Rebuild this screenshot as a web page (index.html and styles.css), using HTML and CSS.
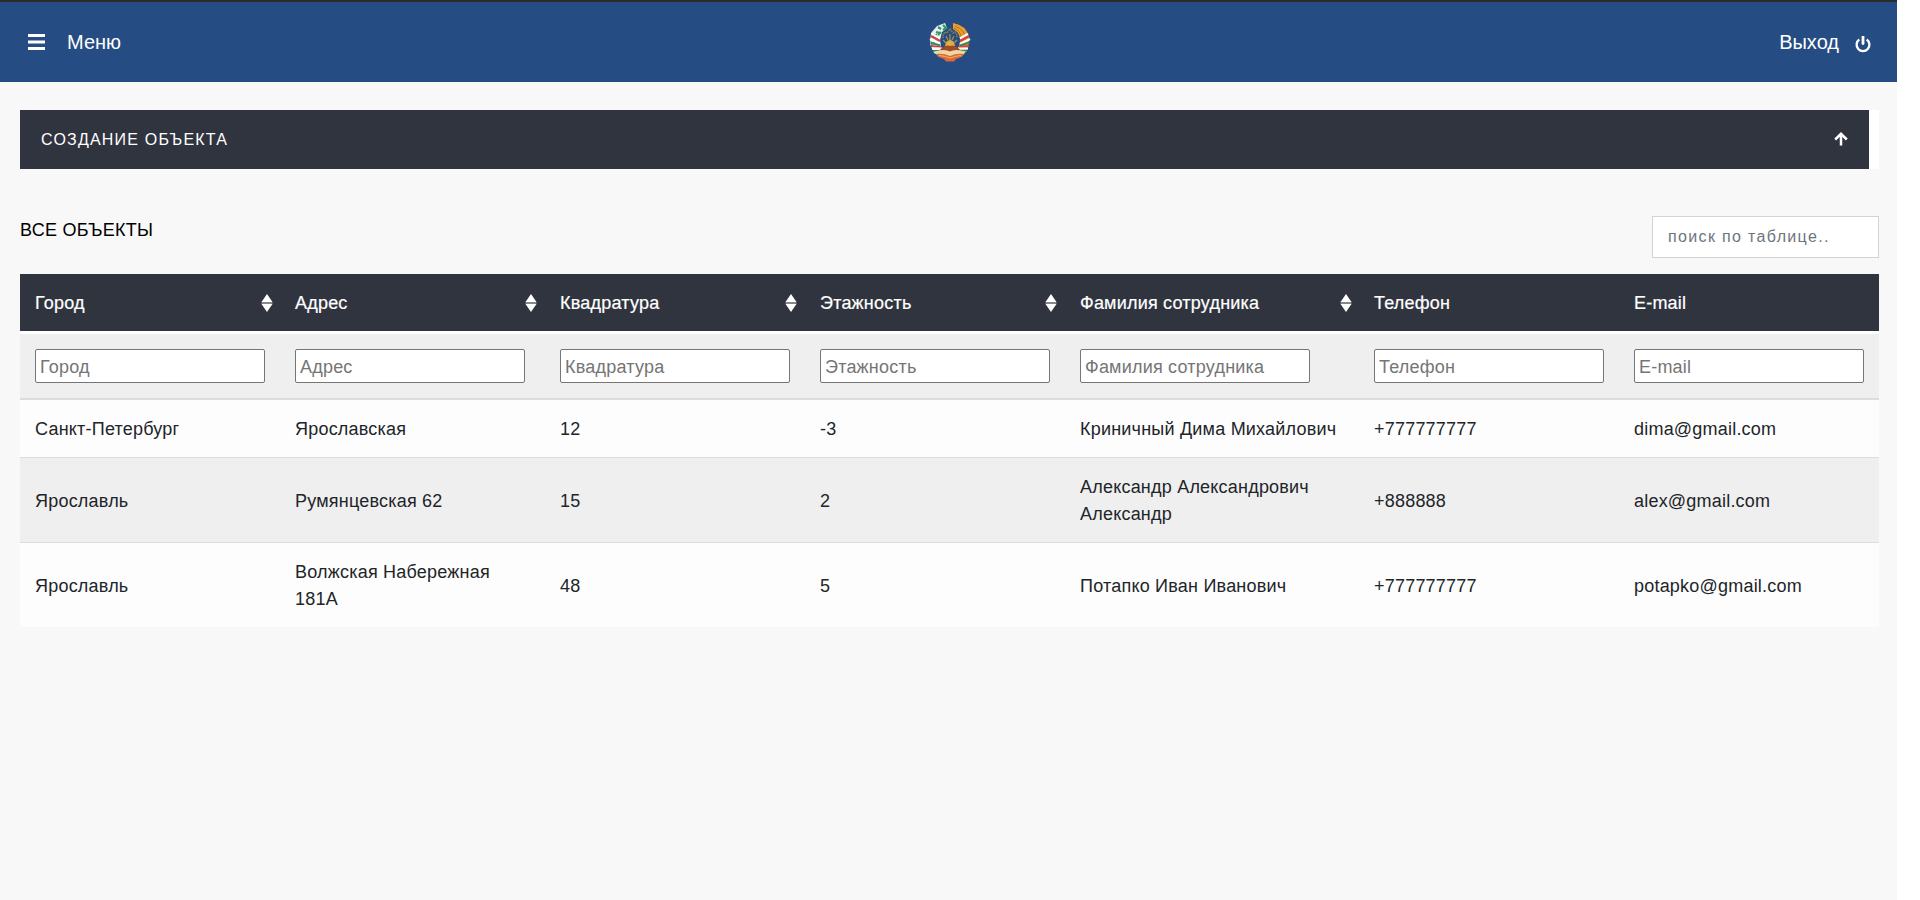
FILE: index.html
```html
<!DOCTYPE html>
<html lang="ru">
<head>
<meta charset="utf-8">
<title>Объекты</title>
<link rel="stylesheet" href="styles.css">
</head>
<body>
<div class="page">
  <header class="topbar">
    <a class="menu">
      <svg class="menu-icon" width="17" height="16" viewBox="0 0 17 16"><path d="M0 0h17v3H0zM0 6.5h17v3H0zM0 13h17v3H0z" fill="#fff"/></svg>
      <span>Меню</span>
    </a>
    <svg class="emblem" width="44" height="44" viewBox="0 0 44 44">
      <path d="M17 3L9 6L3 13L2 24L6 33L14 37L13 27L12 20L14 12L19 8Z" fill="#e4f1ea"/>
      <path d="M10 7l3 2M15 5l3 3-3 2M8 12l4 1M4 17l4-2 1 4M3 24l5-1M13 12l-3 3" stroke="#2c9a66" stroke-width="2.2" fill="none"/>
      <path d="M25 3Q38 5 41 17Q42 29 33 37L29 30Q34 22 31 15Q29 11 25 9Z" fill="#eb9e2c"/>
      <path d="M27 6Q38 10 38 22M26 8Q35 12 34 24" stroke="#b5731f" fill="none"/>
      <path d="M15 18v-3l2-3 2 1 3-4 3 4 2-1 2 3v3" stroke="#8a7c52" stroke-width="1.6" stroke-dasharray="1.5 .8" fill="none"/>
      <path d="M15 20l3 3M29 20l-3 3M18 16l2 4M26 16l-2 4M22 14v6" stroke="#a98c4b" stroke-width="1.3"/>
      <path d="M17 29v-3q1-6 5-6t5 6v3z" fill="#dfb03a"/>
      <path d="M4 14l8 4.500M40 14l-8 4.500" stroke="#fff" stroke-width="2.4"/>
      <path d="M3 16l9 5M41 16l-9 5" stroke="#dc3f43" stroke-width="2.2"/>
      <path d="M2 19l10 5M42 19l-10 5" stroke="#fff" stroke-width="2.5"/>
      <path d="M2.500 22.500l9.500 3M41.500 22.500l-9.500 3M5 31h7M39 31h-7" stroke="#279360" stroke-width="2.2"/>
      <path d="M3 26l10 1M41 26l-10 1" stroke="#dc3f43" stroke-width="2.2"/>
      <path d="M4 28.500h10M40 28.500H30" stroke="#fff" stroke-width="2"/>
      <path d="M12 29.500Q18 24 22 26Q26 24 32 29.500L30 32H14Z" fill="#9c4c29"/>
      <path d="M6 31.500Q17 28.500 22 31.500Q27 28.500 38 31.500L33 37H11Z" fill="#f0d5a5"/>
      <path d="M8 34Q16 33 22 36Q28 33 36 34Q33 38 28 39L26 41.500H18L16 39Q11 38 8 34Z" fill="#dc6a37"/>
      <path d="M11 35.500Q17 36 22 38Q27 36 33 35.500" stroke="#f2b46a" fill="none"/>
    </svg>
    <a class="exit">
      <span>Выход</span>
      <svg class="power" width="16" height="17" viewBox="0 0 16 17"><path d="M4.300 3.500A6.400 6.400 0 1 0 11.700 3.500" fill="none" stroke="#fff" stroke-width="2.300"/><path d="M8 .5v7" stroke="#fff" stroke-width="2.800" stroke-linecap="round"/></svg>
    </a>
  </header>
  <main class="content">
    <section class="card">
      <div class="card-head">
        <span>СОЗДАНИЕ ОБЪЕКТА</span>
        <svg class="arrow" width="14" height="14" viewBox="0 0 14 14"><path d="M7 13.500V2M1.200 7.500L7 1.800L12.800 7.500" fill="none" stroke="#fff" stroke-width="2.500"/></svg>
      </div>
    </section>
    <div class="toolbar">
      <h2 class="title">ВСЕ ОБЪЕКТЫ</h2>
      <input class="search" placeholder="поиск по таблице..">
    </div>
    <table class="table">
      <colgroup><col class="c"><col class="c-address"><col class="c"><col class="c"><col class="c-name"><col class="c"><col class="c"></colgroup>
      <thead>
        <tr class="labels"><th class="sort">Город</th><th class="sort near">Адрес</th><th class="sort near">Квадратура</th><th class="sort near">Этажность</th><th class="sort">Фамилия сотрудника</th><th>Телефон</th><th>E-mail</th></tr>
        <tr class="filters"><td><input placeholder="Город"></td><td><input placeholder="Адрес"></td><td><input placeholder="Квадратура"></td><td><input placeholder="Этажность"></td><td><input placeholder="Фамилия сотрудника"></td><td><input placeholder="Телефон"></td><td><input placeholder="E-mail"></td></tr>
      </thead>
      <tbody>
        <tr><td>Санкт-Петербург</td><td>Ярославская</td><td>12</td><td>-3</td><td>Криничный Дима Михайлович</td><td>+777777777</td><td>dima@gmail.com</td></tr>
        <tr class="even"><td>Ярославль</td><td>Румянцевская 62</td><td>15</td><td>2</td><td>Александр Александрович Александр</td><td>+888888</td><td>alex@gmail.com</td></tr>
        <tr><td>Ярославль</td><td>Волжская Набережная 181А</td><td>48</td><td>5</td><td>Потапко Иван Иванович</td><td>+777777777</td><td>potapko@gmail.com</td></tr>
      </tbody>
    </table>
  </main>
</div>
<script src="sort.js"></script>
</body>
</html>
```
FILE: styles.css
```css
* { box-sizing: border-box; }
html { background: #fff; }
body { margin: 0; height: 900px; overflow: hidden; font: 18px/27px "Liberation Sans", Arial, sans-serif; color: #212529; }
.page { width: 1897px; height: 900px; background: #f8f8f8; border-top: 2px solid #2b2b2b; }
.topbar { display: grid; grid-template-columns: 1fr auto 1fr; align-items: center; height: 80px; padding: 0 26px 0 28px; background: #254d83; color: #fff; font-size: 20px; line-height: 30px; }
.menu { display: flex; align-items: center; gap: 22px; }
.emblem { display: block; }
.exit { display: flex; align-items: center; justify-content: flex-end; gap: 16px; }
.power { margin-top: 4px; }
.content { padding: 28px 18px 0 20px; }
.card { background: #fff; padding-right: 10px; }
.card-head { display: flex; align-items: center; justify-content: space-between; height: 59px; padding: 0 21px; background: #30343f; color: #fff; font-size: 16px; letter-spacing: 1.2px; }
.arrow { margin-top: -2px; }
.toolbar { display: flex; justify-content: space-between; margin-top: 47px; height: 58px; }
.title { margin: 1px 0 0; font-size: 18px; font-weight: 400; line-height: 27px; letter-spacing: .27px; color: #000; }
.search { width: 227px; height: 42px; border: 1px solid #ced4da; border-radius: 0; padding: 0 15px; background: #fff; font: 16px "Liberation Sans", Arial, sans-serif; letter-spacing: 1.35px; }
.search::placeholder { color: #6c757d; opacity: 1; }
.table { width: 1859px; table-layout: fixed; border-collapse: separate; border-spacing: 0; letter-spacing: .21px; }
.c { width: 260px; }
.c-address { width: 265px; }
.c-name { width: 294px; }
.table th, .table td { padding: 16px 15px 14px; text-align: left; vertical-align: middle; }
.labels th { height: 60px; font-weight: 400; color: #fff; background: #30343f; border-bottom: 3px solid #fff; -webkit-text-stroke: .2px #fff; }
.sort-label { display: flex; align-items: center; justify-content: space-between; margin-right: -8px; }
.near .sort-label { margin-right: -7px; }
.sort-icon { margin-top: -1px; }
.table .filters td { height: 66px; padding: 15px; background: #efefef; border-bottom: 2px solid #dadcdd; }
.filters input { display: block; width: 230px; height: 34px; margin: 0; padding: 2px 4px 0; border: 1px solid #767676; border-radius: 2px; background: #fff; font: 18px "Liberation Sans", Arial, sans-serif; letter-spacing: .21px; }
.filters input::placeholder { color: #757575; }
.table tbody td { background: #fdfdfd; border-bottom: 1px solid #dadcdd; }
.table tbody .even td { background: #efefef; }
.table tbody tr:last-child td { border-bottom: 0; }
```
FILE: sort.js
```js
document.querySelectorAll('.sort').forEach(function (cell) {
  cell.innerHTML = '<div class="sort-label"><span>' + cell.textContent + '</span>' +
    '<svg class="sort-icon" width="12" height="18" viewBox="0 0 12 18"><path d="M.5 8L6 0l5.500 8zM.5 10h11L6 18z" fill="#fff"/><path d="M.5 9h11" stroke="#85878d" stroke-width="2"/></svg></div>';
});
```
